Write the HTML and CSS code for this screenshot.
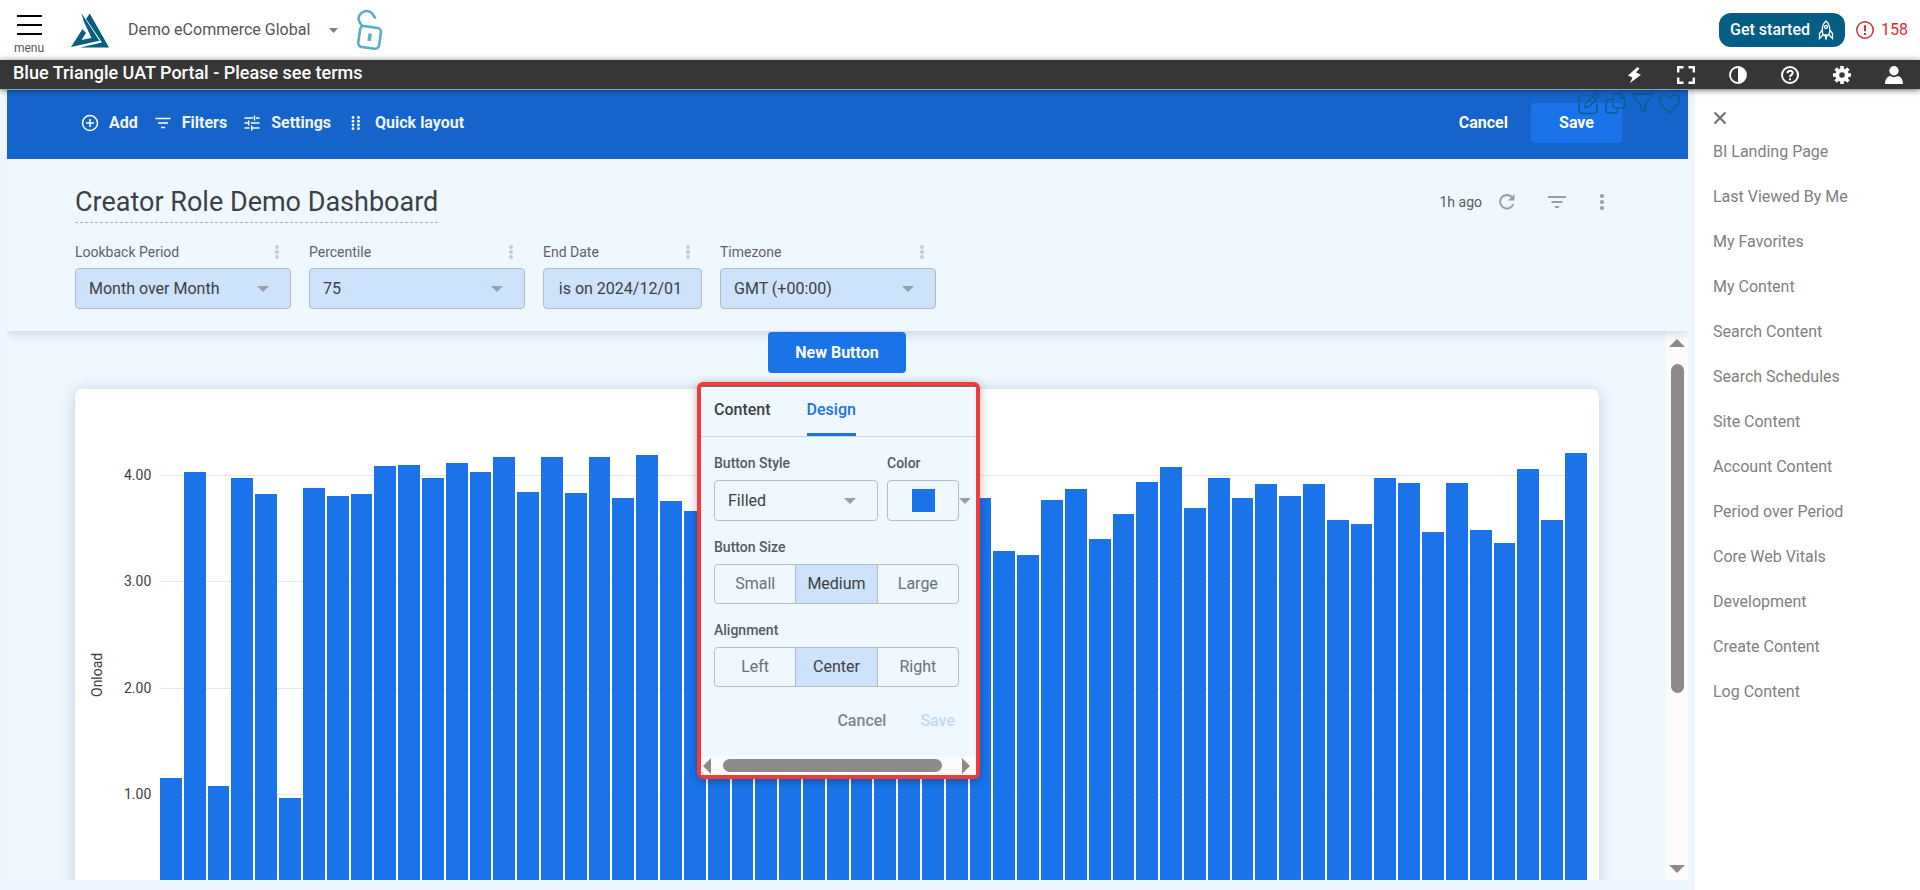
FILE: index.html
```html
<!DOCTYPE html>
<html lang="en">
<head>
<meta charset="utf-8">
<meta name="viewport" content="width=device-width, initial-scale=1">
<title>Creator Role Demo Dashboard</title>
<link rel="stylesheet" href="styles.css">
</head>
<body>
<header class="topbar">
  <button class="menu-button" type="button">
    <span class="menu-line"></span><span class="menu-line"></span><span class="menu-line"></span>
    <span class="menu-text">menu</span>
  </button>
  <svg class="logo" viewBox="0 0 38 35" fill="#075d82" aria-hidden="true"><path d="M0 34 11.500 16l3.500 4-4.500 7 10-2L13 9 10.300 0 28.500 27.800z"/><path d="M15 6 18.800.5 38 34.500H9l22-5z"/></svg>
  <button class="site-picker" type="button">Demo eCommerce Global <svg width="9" height="5" viewBox="0 0 9 5" aria-hidden="true"><path fill="#808080" d="M0 0h9L4.500 5z"/></svg></button>
  <svg class="lock" viewBox="0 0 28 42" fill="none" stroke="#5badc2" stroke-width="2.600" aria-hidden="true"><path d="M6.500 17.300C1.600 12 1.500 7 5.500 4 9.500 1 14 1.500 16.500 5L19.500 9.500"/><rect x="3" y="18" width="21" height="21" rx="4" transform="rotate(8 14 29)"/><path stroke-width="3.500" d="m14.200 24.500-1.100 7.500"/></svg>
  <div class="topbar-right">
    <button class="get-started" type="button">Get started
      <svg width="16" height="20" viewBox="0 0 16 20" fill="none" stroke="#fff" stroke-width="1.300" aria-hidden="true"><path d="M5 15C3.500 9 4.500 4 8 1c3.500 3 4.500 8 3 14zM4.300 10 1.500 13.500v5L5 15M11.700 10l2.800 3.500v5L11 15M7 15.500 8 19l1-3.500"/><circle cx="8" cy="7" r="1.500"/></svg>
    </button>
    <a class="alerts" href="#"><svg width="18" height="18" viewBox="0 0 18 18" fill="none" stroke="#dd2c2c" stroke-width="1.500" aria-hidden="true"><circle cx="9" cy="9" r="8.200"/><path stroke-width="2" d="M9 4.200v6M9 12v2"/></svg>158</a>
  </div>
</header>
<div class="portal-bar">
  <span class="portal-name">Blue Triangle UAT Portal - Please see terms</span>
  <nav class="portal-tools" aria-label="Portal tools">
    <button type="button" aria-label="Activity"><svg viewBox="0 0 18 18"><path fill="#fff" d="M12.500 1 3 9.500l4.500 2L5 17 16 8.800l-5-2.300 3.500-4z"/></svg></button>
    <button type="button" aria-label="Full screen"><svg viewBox="0 0 18 18" fill="none" stroke="#fff" stroke-width="2.400"><path d="M1.200 6.500V1.200h5.300M11.500 1.200h5.300v5.300M16.800 11.500v5.300h-5.300M6.500 16.800H1.200v-5.300"/></svg></button>
    <button type="button" aria-label="Contrast"><svg viewBox="0 0 18 18"><circle cx="9" cy="9" r="8" fill="none" stroke="#fff" stroke-width="1.800"/><path fill="#fff" d="M9 1a8 8 0 0 1 0 16z"/></svg></button>
    <button type="button" aria-label="Help"><svg viewBox="0 0 18 18" fill="none" stroke="#fff" stroke-width="2"><circle cx="9" cy="9" r="8"/><path d="M6.500 7.200c0-3.300 5.200-3.300 5.200-.3C11.700 8.900 9 8.900 9 11M9 12.300v2"/></svg></button>
    <button type="button" aria-label="Preferences"><svg viewBox="0 0 18 18"><circle cx="9" cy="9" r="4.800" fill="none" stroke="#fff" stroke-width="4"/><path fill="none" stroke="#fff" stroke-width="3.600" d="M9 0v3M9 15v3M0 9h3M15 9h3M2.600 2.600l2.200 2.200M13.200 13.200l2.200 2.200M2.600 15.400l2.200-2.200M13.200 4.800l2.200-2.200"/></svg></button>
    <button type="button" aria-label="Account"><svg viewBox="0 0 18 18"><circle cx="9" cy="4.700" r="4.700" fill="#fff"/><path fill="#fff" d="M0 18c0-5 2.500-7.500 5.200-8 2.300 1.500 5.300 1.500 7.600 0C15.500 10.500 18 13 18 18z"/></svg></button>
  </nav>
</div>

<div class="workspace">
  <main class="dashboard">
    <div class="edit-bar">
      <button class="edit-action" type="button"><svg width="18" height="18" viewBox="0 0 18 18" fill="none" stroke="#fff" stroke-width="1.500" aria-hidden="true"><circle cx="9" cy="9" r="7.500"/><path d="M9 5v8M5 9h8"/></svg>Add</button>
      <button class="edit-action" type="button"><svg width="18" height="18" viewBox="0 0 18 18" fill="none" stroke="#fff" stroke-width="1.500" aria-hidden="true"><path d="M1.500 4.500h15M4 9h10M7 13.500h4"/></svg>Filters</button>
      <button class="edit-action" type="button"><svg width="18" height="18" viewBox="0 0 18 18" fill="none" stroke="#fff" stroke-width="1.500" aria-hidden="true"><path d="M1.500 4h8.500M13 4h3.500M11.500 1.500V6.500M1.500 9h3.500M8 9h8.500M5.700 6.500v5M1.500 14h5M9.500 14h7M8.700 11.500v5"/></svg>Settings</button>
      <button class="edit-action" type="button"><svg width="18" height="18" viewBox="0 0 18 18" fill="#fff" aria-hidden="true"><circle cx="6" cy="3.500" r="1.400"/><circle cx="6" cy="7.200" r="1.400"/><circle cx="6" cy="11" r="1.400"/><circle cx="6" cy="14.700" r="1.400"/><circle cx="11.500" cy="3.500" r="1.400"/><circle cx="11.500" cy="7.200" r="1.400"/><circle cx="11.500" cy="11" r="1.400"/><circle cx="11.500" cy="14.700" r="1.400"/></svg>Quick layout</button>
      <div class="edit-finish">
        <button class="edit-cancel" type="button">Cancel</button>
        <button class="edit-save" type="button">Save</button>
      </div>
      <div class="float-tools">
        <button type="button" aria-label="Edit"><svg viewBox="0 0 20 20"><path d="M11 2.500H4A3 3 0 0 0 1 5.500v11a3 3 0 0 0 3 3h11a3 3 0 0 0 3-3V10M6.500 14l1-4.200L16 1.300c2-1.500 4.500 1 3 3L10.700 13zM14.300 3l3 3"/></svg></button>
        <button type="button" aria-label="Copy"><svg viewBox="0 0 20 20"><path d="M9.500 .8h5.500l4 4V12a2 2 0 0 1-2 2H9.500a2 2 0 0 1-2-2V2.800a2 2 0 0 1 2-2zM15 .8v4h4M7.500 6H3a2 2 0 0 0-2 2v9a2 2 0 0 0 2 2h7a2 2 0 0 0 2-2v-3"/></svg></button>
        <button type="button" aria-label="Filter"><svg viewBox="0 0 20 20"><path d="M1 1h18c.5 1 0 1.700-.5 2.300L12.500 11v7.500L8 15.500V11L1.500 3.300C1 2.700.5 2 1 1z"/></svg></button>
        <button type="button" aria-label="Favorite"><svg viewBox="0 0 20 20"><path d="M10 19 2 11C-1.500 6.500 2 2 5.500 2.200 8 2.200 9.300 3.800 10 5c.7-1.200 2-2.800 4.500-2.800C18 2 21.500 6.500 18 11z"/></svg></button>
      </div>
    </div>

    <section class="dash-head">
      <div class="title-row">
        <h1 class="dash-title">Creator Role Demo Dashboard</h1>
        <div class="title-tools">
          <span>1h ago</span>
          <button class="refresh" type="button" aria-label="Refresh"><svg width="18" height="18" viewBox="0 0 18 18"><path fill="none" stroke="#9b9fa5" stroke-width="2" d="M15.300 11a6.800 6.800 0 1 1-1.500-7"/><path fill="#9b9fa5" d="M16.500 1v6.500H10z"/></svg></button>
          <button class="show-filters" type="button" aria-label="Show filters"><svg width="18" height="18" viewBox="0 0 18 18" fill="none" stroke="#9b9fa5" stroke-width="2"><path d="M0 4h18M3.500 9h11M7 14h4"/></svg></button>
          <button type="button" aria-label="More"><svg width="18" height="18" viewBox="0 0 18 18" fill="#9b9fa5"><circle cx="9" cy="3" r="2.100"/><circle cx="9" cy="9" r="2.100"/><circle cx="9" cy="15" r="2.100"/></svg></button>
        </div>
      </div>
      <div class="filters">
        <div class="filter">
          <div class="filter-head"><label for="lookback">Lookback Period</label><span class="dots"><i></i><i></i><i></i></span></div>
          <div class="picker tinted"><select id="lookback"><option>Month over Month</option></select><span class="caret"></span></div>
        </div>
        <div class="filter">
          <div class="filter-head"><label for="percentile">Percentile</label><span class="dots"><i></i><i></i><i></i></span></div>
          <div class="picker tinted"><select id="percentile"><option>75</option></select><span class="caret"></span></div>
        </div>
        <div class="filter filter-date">
          <div class="filter-head"><label for="enddate">End Date</label><span class="dots"><i></i><i></i><i></i></span></div>
          <button class="date-button" id="enddate" type="button">is on 2024/12/01</button>
        </div>
        <div class="filter">
          <div class="filter-head"><label for="timezone">Timezone</label><span class="dots"><i></i><i></i><i></i></span></div>
          <div class="picker tinted"><select id="timezone"><option>GMT (+00:00)</option></select><span class="caret"></span></div>
        </div>
      </div>
    </section>

    <div class="scroll-area">
      <div class="tiles">
        <div class="button-tile">
          <button class="new-button" type="button">New Button</button>
          <form class="popover">
            <div class="tabs" role="tablist">
              <button class="tab" type="button" role="tab" aria-selected="false">Content</button>
              <button class="tab tab-on" type="button" role="tab" aria-selected="true">Design</button>
            </div>
            <div class="pop-body">
              <div class="pop-row">
                <div class="style-field">
                  <label class="pop-label" for="style">Button Style</label>
                  <div class="picker"><select id="style"><option>Filled</option></select><span class="caret"></span></div>
                </div>
                <div class="color-field">
                  <label class="pop-label" for="color">Color</label>
                  <div class="color-line"><button class="color-button" id="color" type="button"><span class="swatch"></span></button><span class="caret"></span></div>
                </div>
              </div>
              <fieldset class="choice">
                <legend class="pop-label">Button Size</legend>
                <div class="segments">
                  <label class="segment"><input type="radio" name="size">Small</label>
                  <label class="segment"><input type="radio" name="size" checked>Medium</label>
                  <label class="segment"><input type="radio" name="size">Large</label>
                </div>
              </fieldset>
              <fieldset class="choice">
                <legend class="pop-label">Alignment</legend>
                <div class="segments">
                  <label class="segment"><input type="radio" name="align">Left</label>
                  <label class="segment"><input type="radio" name="align" checked>Center</label>
                  <label class="segment"><input type="radio" name="align">Right</label>
                </div>
              </fieldset>
              <div class="pop-finish">
                <button class="pop-cancel" type="button">Cancel</button>
                <button class="pop-save" type="button" disabled>Save</button>
              </div>
            </div>
            <div class="hscroll" aria-hidden="true"><span class="arrow-left"></span><span class="hthumb"></span><span class="arrow-right"></span></div>
          </form>
        </div>

        <section class="chart-card">
          <div class="axis-title">Onload</div>
          <div class="plot">
            <div class="ticks">
              <div class="tick tick-half"></div>
              <div class="tick"><span>4.00</span></div>
              <div class="tick"><span>3.00</span></div>
              <div class="tick"><span>2.00</span></div>
              <div class="tick"><span>1.00</span></div>
            </div>
            <div class="bars" id="bars"></div>
          </div>
        </section>
      </div>
      <div class="vscroll" aria-hidden="true"><span class="arrow-up"></span><span class="vtrack"><span class="vthumb"></span></span><span class="arrow-down"></span></div>
    </div>
  </main>

  <aside class="side">
    <button class="close" type="button" aria-label="Close"><svg width="14" height="14" viewBox="0 0 14 14" stroke="#777" stroke-width="2.400"><path d="m1.500 1.500 11 11M12.500 1.500l-11 11"/></svg></button>
    <nav class="side-nav">
      <a href="#">BI Landing Page</a>
      <a href="#">Last Viewed By Me</a>
      <a href="#">My Favorites</a>
      <a href="#">My Content</a>
      <a href="#">Search Content</a>
      <a href="#">Search Schedules</a>
      <a href="#">Site Content</a>
      <a href="#">Account Content</a>
      <a href="#">Period over Period</a>
      <a href="#">Core Web Vitals</a>
      <a href="#">Development</a>
      <a href="#">Create Content</a>
      <a href="#">Log Content</a>
    </nav>
  </aside>
</div>
<script src="chart.js"></script>
</body>
</html>
```

FILE: chart.js
```js
// Onload times in seconds; the axis runs from 0 to 4.5.
const AXIS_MAX = 4.5;
const onload = [
  1.15, 4.03, 1.07, 3.97, 3.82, 0.96, 3.88, 3.80, 3.82, 4.09,
  4.10, 3.97, 4.11, 4.03, 4.17, 3.84, 4.17, 3.83, 4.17, 3.78,
  4.19, 3.76, 3.66, 3.80, 3.90, 3.70, 3.80, 3.90, 3.80, 3.70,
  3.60, 3.80, 3.90, 3.80, 3.78, 3.29, 3.25, 3.77, 3.87, 3.40,
  3.63, 3.94, 4.08, 3.69, 3.97, 3.78, 3.92, 3.80, 3.92, 3.58,
  3.54, 3.97, 3.93, 3.46, 3.93, 3.48, 3.36, 4.06, 3.58, 4.21
];
const bars = document.getElementById("bars");
for (const value of onload) {
  const bar = document.createElement("div");
  bar.className = "bar";
  bar.style.height = (value / AXIS_MAX) * 100 + "%";
  bars.appendChild(bar);
}
```

FILE: styles.css
```css
* { box-sizing: border-box; }

body {
  margin: 0;
  height: 100vh;
  display: flex;
  flex-direction: column;
  overflow: hidden;
  background: #edf6ff;
  color: #3c4043;
  font: 16px/20px Roboto, sans-serif;
}

button, select, input { font: inherit; color: inherit; }
button { border: 0; padding: 0; background: none; cursor: pointer; }
a { color: inherit; text-decoration: none; }
svg { display: block; flex: none; }

/* Top bar */
.topbar {
  flex: none;
  height: 60px;
  padding: 0 12px 0 15px;
  display: flex;
  align-items: center;
  background: #fff;
}
.menu-button {
  display: flex;
  flex-direction: column;
  align-items: center;
  gap: 7px;
  width: 28px;
  padding-top: 8px;
}
.menu-line { width: 25px; height: 2px; background: #000; }
.menu-text { font-size: 12px; line-height: 12px; color: #555; }
.logo { width: 38px; height: 35px; margin-left: 28px; }
.site-picker {
  display: flex;
  align-items: center;
  gap: 19px;
  margin-left: 19px;
  color: #555;
}
.lock { width: 28px; height: 42px; margin-left: 18px; }
.topbar-right { margin-left: auto; display: flex; align-items: center; gap: 11px; }
.get-started {
  display: flex;
  align-items: center;
  gap: 8px;
  height: 34px;
  padding: 0 11px;
  border-radius: 12px;
  background: #045d82;
  color: #fff;
  font-weight: 500;
}
.alerts { display: flex; align-items: center; gap: 7px; color: #dd2c2c; }

.portal-bar {
  flex: none;
  height: 29px;
  padding: 0 17px 0 13px;
  display: flex;
  align-items: center;
  justify-content: space-between;
  background: #363636;
  box-shadow: 0 1px 6px rgba(0, 0, 0, .6);
  color: #fff;
  font-size: 18px;
  font-weight: 500;
  z-index: 3;
}
.portal-name { padding-bottom: 4px; }
.portal-tools { display: flex; gap: 34px; }
.portal-tools svg { width: 18px; height: 18px; }

/* Workspace */
.workspace { flex: 1; min-height: 0; display: flex; padding-top: 1px; }
.dashboard {
  flex: 1;
  min-width: 0;
  margin: 0 7px 10px;
  display: flex;
  flex-direction: column;
}
.edit-bar {
  position: relative;
  flex: none;
  height: 69px;
  padding: 0 66px 4px 74px;
  display: flex;
  align-items: center;
  gap: 16px;
  background: #1563cb;
  color: #fff;
  font-weight: 700;
}
.edit-action { display: flex; align-items: center; gap: 10px; color: #eef5ff; }
.edit-finish { margin-left: auto; display: flex; align-items: center; gap: 23px; }
.edit-save { width: 91px; height: 40px; border-radius: 4px; background: #1a73e8; }
.float-tools { position: absolute; top: 3px; right: 8px; display: flex; gap: 6px; }
.float-tools svg {
  width: 21px;
  height: 21px;
  fill: none;
  stroke: #075e88;
  stroke-width: 1.300;
  overflow: visible;
}

.dash-head {
  position: relative;
  z-index: 1;
  flex: none;
  height: 172px;
  padding: 26px 77px 0 68px;
  background: #eff7ff;
  box-shadow: 0 2px 10px rgba(60, 80, 110, .25);
  clip-path: inset(0 0 -16px 0);
}
.title-row { display: flex; align-items: flex-start; justify-content: space-between; }
.dash-title {
  margin: 0;
  padding: 1px 0 4px;
  border-bottom: 1px dashed #aeb4ba;
  font-size: 27px;
  line-height: 32px;
  font-weight: 400;
}
.title-tools { display: flex; align-items: center; padding-top: 7px; font-size: 14px; color: #565b61; }
.refresh { margin-left: 16px; }
.show-filters { margin: 0 27px 0 32px; }

.filters { display: flex; gap: 18px; margin-top: 19px; }
.filter { width: 216px; }
.filter-date { width: 159px; }
.filter-head {
  display: flex;
  align-items: center;
  justify-content: space-between;
  padding-right: 12px;
  margin-bottom: 6px;
  font-size: 14px;
  color: #5f6368;
}
.dots { display: grid; gap: 1px; }
.dots i { width: 4px; height: 4px; border-radius: 50%; background: #c3cad3; }
.picker { position: relative; }
.picker select {
  display: block;
  width: 100%;
  height: 41px;
  padding: 0 13px;
  border: 1px solid #b6bcc4;
  border-radius: 4px;
  background: transparent;
  appearance: none;
}
.picker .caret { position: absolute; right: 22px; top: 18px; }
.tinted select { background: #cde2fb; }
.caret {
  width: 0;
  height: 0;
  border: 6px solid transparent;
  border-top-color: #9b9fa5;
  border-bottom: 0;
}
.date-button {
  width: 100%;
  height: 41px;
  padding-right: 19px;
  border: 1px solid #b6bcc4;
  border-radius: 4px;
  background: #cde2fb;
  text-align: right;
}

/* Scrolling tiles */
.scroll-area { flex: 1; min-height: 0; display: flex; overflow: hidden; background: #eff7ff; }
.tiles { flex: 1; min-width: 0; padding: 1px 67px 0 68px; }
.button-tile { position: relative; z-index: 2; display: flex; justify-content: center; }
.new-button {
  width: 138px;
  height: 41px;
  border-radius: 4px;
  background: #1a73e8;
  color: #fff;
  font-weight: 700;
}
.vscroll {
  flex: none;
  width: 22px;
  padding: 8px 0 7px;
  display: flex;
  flex-direction: column;
  align-items: center;
  background: #fcfcfc;
}
.vtrack { flex: 1; width: 13px; padding: 17px 0; }
.vthumb { display: block; height: 68%; border-radius: 7px; background: #8b8b8b; }
.arrow-up { border: 8px solid transparent; border-top: 0; border-bottom-color: #8b8b8b; }
.arrow-down { border: 8px solid transparent; border-bottom: 0; border-top-color: #8b8b8b; }

/* Button settings popover */
.popover {
  position: absolute;
  top: 50px;
  left: 50%;
  width: 283px;
  margin-left: -140px;
  border: 4px solid #f23a3a;
  border-radius: 6px;
  background: #eff7ff;
  box-shadow: 0 2px 10px rgba(0, 0, 0, .3);
}
.tabs {
  display: flex;
  gap: 36px;
  height: 51px;
  padding: 0 13px;
  border-top: 1px solid #5f7482;
  border-bottom: 1px solid #cdd5dd;
}
.tab { padding-bottom: 1px; border-bottom: 3px solid transparent; font-weight: 500; }
.tab-on { border-bottom-color: #1a73e8; color: #1a73e8; }
.pop-body { padding: 16px 17px 25px 13px; }
.pop-row { display: flex; gap: 9px; }
.style-field { flex: none; width: 164px; }
.pop-label { display: block; padding: 0; margin-bottom: 7px; font-size: 14px; font-weight: 500; color: #565b61; }
.color-line { display: flex; align-items: center; }
.color-button {
  flex: none;
  display: grid;
  place-items: center;
  width: 72px;
  height: 41px;
  border: 1px solid #b6bcc4;
  border-radius: 4px;
}
.swatch { width: 23px; height: 23px; background: #1a73e8; }
.choice { margin: 16px 0 0; padding: 0; border: 0; min-width: 0; }
.segments {
  display: flex;
  height: 40px;
  border: 1px solid #b6bcc4;
  border-radius: 4px;
  overflow: hidden;
}
.segment { flex: 1; display: grid; place-items: center; color: #6b7178; cursor: pointer; }
.segment + .segment { border-left: 1px solid #b6bcc4; }
.segment input { position: absolute; opacity: 0; pointer-events: none; }
.segment:has(input:checked) { background: #cde2fb; color: #3c4043; }
.pop-finish { display: flex; justify-content: flex-end; gap: 34px; margin-top: 24px; padding-right: 4px; font-weight: 500; }
.pop-cancel { color: #80868b; }
.pop-save { color: #c2d9f5; }
.hscroll {
  display: flex;
  align-items: center;
  height: 19px;
  padding: 0 6px 0 2px;
  background: #fcfcfc;
}
.hthumb { width: 219px; height: 13px; margin: 0 auto 0 12px; border-radius: 7px; background: #8b8b8b; }
.arrow-left { border: 8px solid transparent; border-left: 0; border-right-color: #8b8b8b; }
.arrow-right { border: 8px solid transparent; border-right: 0; border-left-color: #8b8b8b; }

/* Chart */
.chart-card {
  display: flex;
  height: 560px;
  margin-top: 16px;
  padding: 33px 12px 16px;
  border-radius: 8px;
  background: #fff;
  box-shadow: 0 2px 16px rgba(60, 80, 120, .25);
}
.axis-title {
  writing-mode: vertical-rl;
  transform: rotate(180deg);
  width: 22px;
  height: 506px;
  text-align: center;
  font-size: 14px;
}
.plot { flex: 1; display: grid; height: 478px; margin-left: 15px; }
.ticks, .bars { grid-area: 1 / 1; }
.ticks { display: flex; flex-direction: column; font-size: 14px; }
.tick { flex: 2 1 0; display: grid; grid-template-columns: 36px 1fr; align-items: start; }
.tick-half { flex-grow: 1; }
.tick span { margin-top: -10px; }
.tick:not(.tick-half)::after { content: ""; height: 1px; background: #e6e6e6; }
.bars { display: flex; align-items: flex-end; gap: 2px; margin-left: 36px; }
.bar { flex: 1; background: #1a73e8; }

/* Side navigation */
.side { flex: none; width: 225px; padding: 21px 18px; background: #fff; color: #808080; }
.close { display: block; }
.side-nav { display: flex; flex-direction: column; gap: 25px; margin-top: 17px; }
```
